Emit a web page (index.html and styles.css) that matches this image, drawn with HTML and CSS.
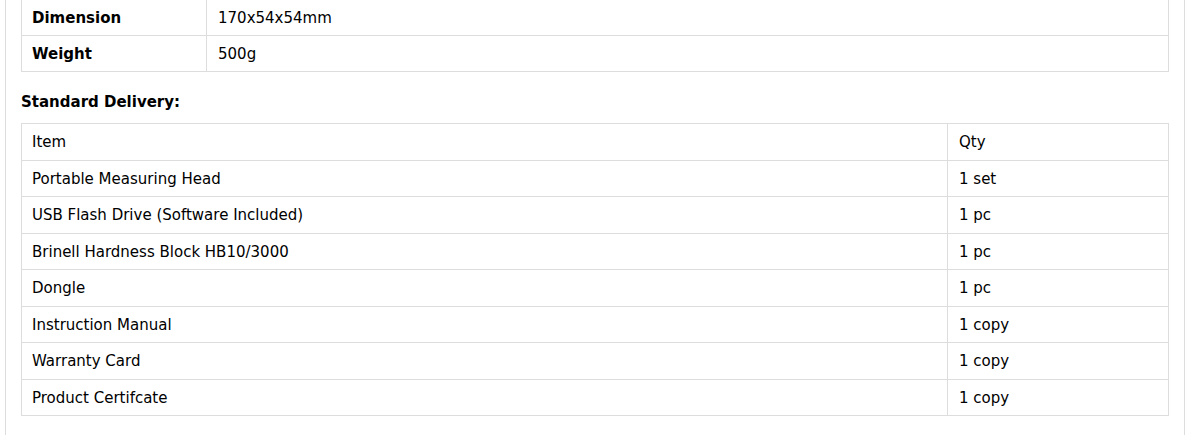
FILE: index.html
```html
<!DOCTYPE html>
<html>
<head>
<meta charset="utf-8">
<link rel="stylesheet" href="styles.css">
</head>
<body>
<div class="panel">
  <table class="grid specs">
    <tr><td class="key">Dimension</td><td class="val">170x54x54mm</td></tr>
    <tr><td class="key">Weight</td><td class="val">500g</td></tr>
  </table>
  <div class="heading">Standard Delivery:</div>
  <table class="grid delivery">
    <tr><td>Item</td><td class="qty">Qty</td></tr>
    <tr><td>Portable Measuring Head</td><td class="qty">1 set</td></tr>
    <tr><td>USB Flash Drive (Software Included)</td><td class="qty">1 pc</td></tr>
    <tr><td>Brinell Hardness Block HB10/3000</td><td class="qty">1 pc</td></tr>
    <tr><td>Dongle</td><td class="qty">1 pc</td></tr>
    <tr><td>Instruction Manual</td><td class="qty">1 copy</td></tr>
    <tr><td>Warranty Card</td><td class="qty">1 copy</td></tr>
    <tr><td>Product Certifcate</td><td class="qty">1 copy</td></tr>
  </table>
</div>
</body>
</html>
```
FILE: styles.css
```css
html, body {
  margin: 0;
  padding: 0;
  background: #fff;
}
body {
  font-family: "DejaVu Sans", Verdana, sans-serif;
  font-size: 15px;
  color: #000;
}
.panel {
  margin-left: 5px;
  width: 1180px;
  box-sizing: border-box;
  border-left: 1px solid #ddd;
  border-right: 1px solid #ddd;
  padding: 0 15px 40px 15px;
}
.grid {
  width: 100%;
  border-collapse: collapse;
}
.grid td {
  border: 1px solid #ddd;
  padding: 9px 11px 7px 10px;
  text-align: left;
  vertical-align: middle;
}
.grid td.val,
.grid td.qty {
  padding-left: 11px;
}
.specs {
  margin-top: -1px;
}
.specs td {
  line-height: 19px;
}
.specs td.key {
  width: 163px;
  font-weight: bold;
}
.heading {
  font-weight: bold;
  line-height: 20px;
  margin-top: 20px;
}
.delivery {
  margin-top: 11px;
}
.delivery td {
  line-height: 19.5px;
}
.delivery td.qty {
  width: 198px;
}
```
